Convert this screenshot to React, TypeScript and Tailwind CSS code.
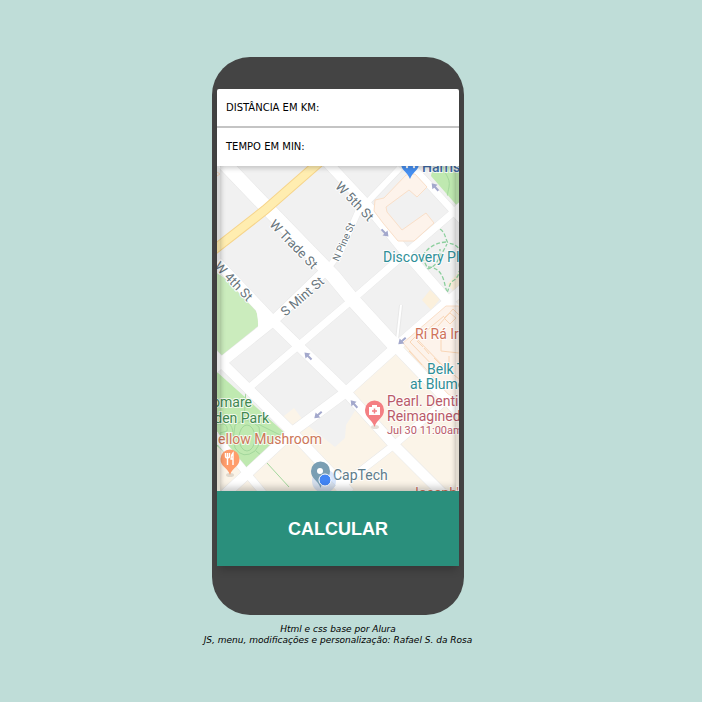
function Arrow({ x, y, angle }: { x: number; y: number; angle: number }) {
  return (
    <g transform={`translate(${x} ${y}) rotate(${angle})`} fill="#a3a8cc">
      <path d="M-5 0L0-3.500V-1H5V1H0V3.500Z" />
    </g>
  );
}

function CityMap() {
  return (
    <svg viewBox="217 166 242 325" className="block w-full" role="img" aria-label="Mapa" fontFamily="Roboto, sans-serif">
      <rect x="217" y="166" width="242" height="325" fill="#f1f1f1" />
      <path d="M396 347L346 392L358 406L346 425L345 438L335 447L306 424L294 408L284 416L245 475L217 446V491H459V293Z" fill="#fbf4e8" />
      <path d="M422 300l8-10 10 9-9 11zM447 284l12-12v26z" fill="#fbf0dc" />
      <path d="M217 273L244 291Q259 304 258 328L217 363Z" fill="#cbecbd" />
      <path d="M217 372L286 434L245 472L217 446Z" fill="#bfe9b0" />
      <path d="M433 166h26v42l-28-32z" fill="#bfe9b0" />

      <g fill="none" stroke="#a3d79c">
        <path d="M217 424h7q4 2 3 7l-7 2v5M246 388l-2 33M254 422l28 14M217 446c16-6 20-14 11-24M256 451l6 5" />
        <ellipse cx="247" cy="438" rx="8" ry="13" />
        <path d="M235 425q12-10 24 2 3 16-4 24-12 9-20-3-3-12 0-23" />
        <path d="M444 166c-1 8 7 11 5 21s-2 8-1 8M267 463l22 24" />
      </g>
      <g fill="none" stroke="#8ccf9d" strokeDasharray="4 2" strokeWidth="1.3">
        <path d="M440 229c6 4 5 10 8 14q8 1 11 6M446 242q-16 1-24 15l6 12q12-4 12-20M428 267q12 0 16 14l3 12 4-11q8-4 8-11M440 257l7-13" />
      </g>

      <g stroke="#e8e8e8" fill="none">
        <path d="M224 163L272 213L334 277L352 299L396 347" strokeWidth="15" />
        <path d="M396 347L465 419" strokeWidth="11" />
        <path d="M217 262L272 320L346 392L394 445L442 493M325 160L367 205L407 254L449 302L463 316M212 353L292 432L350 493M212 370L272 322L329 267M222 497L292 432L346 392L396 347L463 289" strokeWidth="11" />
        <path d="M250 387L298 346L352 300L407 252L463 204M410 164L454 212L463 222M336 490L394 445L463 386M213 433L264 494" strokeWidth="8" />
        <path d="M325 272L340 253L358 212L400 168" strokeWidth="7" />
        <path d="M401 305L397 340" strokeWidth="4" />
      </g>
      <g stroke="#fff" fill="none">
        <path d="M224 163L272 213L334 277L352 299L396 347" strokeWidth="14" />
        <path d="M396 347L465 419M217 262L272 320L346 392L394 445L442 493M325 160L367 205L407 254L449 302L463 316M212 353L292 432L350 493M212 370L272 322L329 267M222 497L292 432L346 392L396 347L463 289" strokeWidth="10" />
        <path d="M250 387L298 346L352 300L407 252L463 204M410 164L454 212L463 222M336 490L394 445L463 386M213 433L264 494" strokeWidth="7" />
        <path d="M325 272L340 253L358 212L400 168" strokeWidth="6" />
        <path d="M401 305L397 340" strokeWidth="2" />
      </g>
      <path d="M252 303Q259 312 258 328L272 325L268 312Z" fill="#fff" />
      <path d="M210 253L265 210L322 160" stroke="#f6d48b" strokeWidth="10" fill="none" />
      <path d="M210 253L265 210L322 160" stroke="#ffedb0" strokeWidth="8" fill="none" />
      <path d="M217 172l3 2-3 2" fill="none" stroke="#fbd9bd" />

      <g fill="#fdf3eb" stroke="#fadfc8">
        <path d="M375 200L384 198L406 175L415 174L427 187L417 197L409 190L386 207L387 212L402 230L426 213L434 223L414 241H398L383 223L374 211Z" />
        <path d="M403 343L446 306H459V400L448 394Z" />
      </g>
      <g fill="none" stroke="#f9d6b6">
        <path d="M410 342l5-5 32 33-5 5zM417 341l6 6M424 348l5 6M434 358l6 6M438 326l15-17 6 6M441 331v20l18 2M444 318l6 6 6-6-6-5zM426 331l18-15M409 351l13 14M449 356v15l10 8" />
      </g>
      <path d="M432 375l10-6 17 16v18z" fill="#fdf3eb" />

      <Arrow x={435} y={187} angle={48} />
      <Arrow x={385} y={233} angle={226} />
      <Arrow x={308} y={356} angle={45} />
      <Arrow x={354} y={404} angle={48} />
      <Arrow x={402} y={341} angle={-42} />
      <Arrow x={318} y={415} angle={-42} />

      <g fontSize="13" fill="#68757c" stroke="#fff" strokeWidth="2" paintOrder="stroke" textAnchor="middle">
        <text transform="translate(294 244) rotate(46)" y="5">W Trade St</text>
        <text transform="translate(355 201) rotate(46)" y="5">W 5th St</text>
        <text transform="translate(234 281) rotate(46)" y="5">W 4th St</text>
        <text transform="translate(302 296) rotate(-41)" y="5">S Mint St</text>
        <text transform="translate(344 242) rotate(-66)" y="3" fontSize="10">N Pine St</text>
      </g>
      <g fontSize="14" stroke="#fff" strokeWidth="2" strokeOpacity="0.8" paintOrder="stroke">
        <text x="422" y="172" fill="#3f6aa5" fontWeight="500">Harris</text>
        <g fill="#2f8f98">
          <text x="383" y="262">Discovery Pl</text>
          <text x="427" y="374">Belk T</text>
          <text x="410" y="389">at Blume</text>
        </g>
        <text x="415" y="339" fill="#d0735a">Rí Rá Ir</text>
        <g fill="#b95a69">
          <text x="387" y="406">Pearl. Dentis</text>
          <text x="387" y="421">Reimagined</text>
          <text x="387" y="434" fontSize="11">Jul 30 11:00am</text>
        </g>
        <text x="333" y="480" fill="#607d8b">CapTech</text>
        <text x="411" y="498" fill="#d0735a">Joseph's</text>
        <g textAnchor="end">
          <text x="252" y="407" fill="#3f8751">omare</text>
          <text x="269" y="423" fill="#3f8751">den Park</text>
          <text x="322" y="444" fill="#cd7759">Mellow Mushroom</text>
        </g>
      </g>

      <path d="M401 163a9 9 0 0 1 18 0c0 8-6 8-9 16-3-8-9-8-9-16z" fill="#468ff0" />
      <circle cx="407" cy="167" r="1.200" fill="#fff" />
      <circle cx="414" cy="167" r="1.200" fill="#fff" />

      <ellipse cx="375" cy="427" rx="4" ry="2" fill="#e5dfd8" />
      <path d="M365 410a9.500 9.500 0 0 1 19 0c0 8-7 9-9.500 17-2.500-8-9.500-9-9.500-17z" fill="#f47f83" />
      <path d="M369 407h3v-2h5v2h3v8h-11z" fill="#fff" />
      <path d="M374.500 408.500v5M372 411h5" stroke="#f47f83" strokeWidth="1.500" />

      <ellipse cx="230" cy="475" rx="4" ry="2" fill="#e0d8cc" />
      <path d="M220.500 459a9.500 9.500 0 0 1 19 0c0 8-7 8-9.500 16-2.500-8-9.500-8-9.500-16z" fill="#ff9d6b" />
      <path d="M225.500 453v3q0 2 2 2t2-2v-3M227.500 453v12M233 465v-12q-2 2-2 6h2" fill="none" stroke="#fff" strokeWidth="1.400" />

      <circle cx="324" cy="481" r="12" fill="#8fb6f5" fillOpacity="0.35" />
      <path d="M311 471a9.500 9.500 0 0 1 19 0c0 8-7 9-9.500 17-2.500-8-9.500-9-9.500-17z" fill="#7a9eb3" />
      <circle cx="320" cy="471" r="3" fill="#fff" />
      <circle cx="325" cy="480" r="6" fill="#4285f4" stroke="#fff" />
    </svg>
  );
}

function Field({ id, label }: { id: string; label: string }) {
  return (
    <div className="box-content flex h-[37px] items-center font-[Verdana,'DejaVu_Sans',sans-serif] text-[10px]">
      <label htmlFor={id} className="shrink-0 pl-[9px] uppercase">{label}</label>
      <input id={id} type="text" className="h-full min-w-0 flex-1 bg-transparent px-1 outline-none" />
    </div>
  );
}

export default function App() {
  return (
    <main className="flex min-h-screen flex-col items-center bg-[#bfddd8] pt-[57px] pr-[26px]">
      <form className="w-[252px] rounded-[38px] bg-[#444] px-[5px] pt-8 pb-[49px]">
        <div className="rounded-t-[2px] shadow-[0_6px_8px_-2px_rgba(0,0,0,0.2)]">
          <div className="divide-y-2 divide-[#c4c4c4] rounded-t-[2px] bg-white pb-px">
            <Field id="distancia" label="Distância em km:" />
            <Field id="tempo" label="Tempo em min:" />
          </div>
          <div className="relative">
            <CityMap />
            <div className="pointer-events-none absolute inset-0 border-x-[3px] border-black/10 shadow-[inset_0_3px_4px_rgba(0,0,0,0.15),inset_0_-4px_6px_rgba(0,0,0,0.2)]" />
          </div>
          <button type="button" className="block h-[75px] w-full bg-[#2a8f7c] font-['Liberation_Sans',Arial,sans-serif] text-lg font-bold text-white">
            CALCULAR
          </button>
        </div>
      </form>
      <footer className="pt-[9px] text-center font-[Verdana,'DejaVu_Sans',sans-serif] text-[9px] leading-[11px] italic">
        Html e css base por Alura
        <br />
        JS, menu, modificações e personalização: Rafael S. da Rosa
      </footer>
    </main>
  );
}
